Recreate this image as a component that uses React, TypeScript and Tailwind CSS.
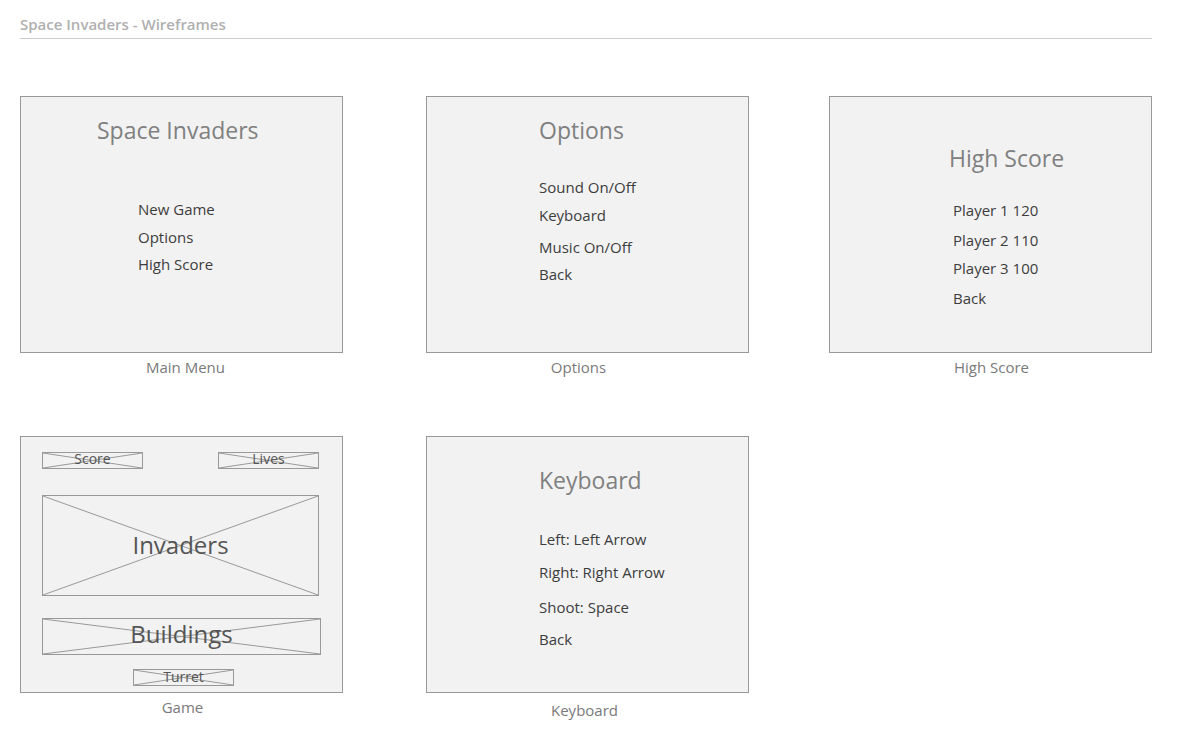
import React from 'react';

const font = { fontFamily: '"Open Sans", "Noto Sans", sans-serif' };

interface ScreenProps {
  label: string;
  className?: string;
  labelClass?: string;
  children: React.ReactNode;
  bodyClass?: string;
}

const Screen: React.FC<ScreenProps> = ({ label, className = '', labelClass = '', bodyClass = '', children }) => (
  <div className={`flex flex-col w-[323px] ${className}`}>
    <div className={`h-[257px] border border-[#999] bg-[#f2f2f2] flex flex-col ${bodyClass}`}>{children}</div>
    <div className={`text-center text-[15px] leading-[20px] text-[#7a7a7a] ${labelClass}`}>{label}</div>
  </div>
);

const Title: React.FC<{ children: React.ReactNode; className?: string }> = ({ children, className = '' }) => (
  <div className={`text-[23px] leading-[32px] text-[#808080] ${className}`}>{children}</div>
);

const Item: React.FC<{ children: React.ReactNode; className?: string }> = ({ children, className = '' }) => (
  <div className={`text-[15px] leading-[20px] text-[#3d3d3d] ${className}`}>{children}</div>
);

// placeholder box with crossed lines
const XBox: React.FC<{ text: string; className?: string; textClass?: string }> = ({ text, className = '', textClass = '' }) => (
  <div className={`relative border border-[#999] flex items-center justify-center ${className}`}>
    <svg className="absolute inset-0 w-full h-full" preserveAspectRatio="none" viewBox="0 0 100 100">
      <line x1="0" y1="0" x2="100" y2="100" stroke="#999" strokeWidth="1" vectorEffect="non-scaling-stroke" />
      <line x1="100" y1="0" x2="0" y2="100" stroke="#999" strokeWidth="1" vectorEffect="non-scaling-stroke" />
    </svg>
    <span className={`relative text-[#555] ${textClass}`}>{text}</span>
  </div>
);

export default function App() {
  return (
    <div className="w-[1192px] h-[753px] bg-white px-[20px] pt-[14px]" style={font}>
      <div className="w-[1132px] border-b border-[#ccc] pb-[4px]">
        <div className="text-[15px] leading-[20px] font-semibold text-[#b0b0b0]">Space Invaders - Wireframes</div>
      </div>

      <div className="flex mt-[57px]">
        <Screen label="Main Menu" labelClass="mt-[4px] pl-[8px]" bodyClass="pt-[17px] pl-[76px]">
          <Title>Space Invaders</Title>
          <Item className="mt-[53px] ml-[41px]">New Game</Item>
          <Item className="mt-[8px] ml-[41px]">Options</Item>
          <Item className="mt-[7px] ml-[41px]">High Score</Item>
        </Screen>
        <Screen label="Options" className="ml-[83px]" labelClass="mt-[4px] pr-[18px]" bodyClass="pt-[17px] pl-[112px]">
          <Title>Options</Title>
          <Item className="mt-[31px]">Sound On/Off</Item>
          <Item className="mt-[8px]">Keyboard</Item>
          <Item className="mt-[12px]">Music On/Off</Item>
          <Item className="mt-[7px]">Back</Item>
        </Screen>
        <Screen label="High Score" className="ml-[80px]" labelClass="mt-[4px] pl-[2px]" bodyClass="pt-[45px] pl-[119px]">
          <Title>High Score</Title>
          <Item className="mt-[26px] ml-[4px]">Player 1 120</Item>
          <Item className="mt-[10px] ml-[4px]">Player 2 110</Item>
          <Item className="mt-[8px] ml-[4px]">Player 3 100</Item>
          <Item className="mt-[10px] ml-[4px]">Back</Item>
        </Screen>
      </div>

      <div className="flex mt-[59px]">
        <Screen label="Game" labelClass="mt-[4px] pl-[2px]" bodyClass="pt-[15px] pl-[21px]">
          <div className="flex">
            <XBox text="Score" className="w-[101px] h-[17px]" textClass="text-[14px] leading-[17px] -mt-[4px]" />
            <XBox text="Lives" className="w-[101px] h-[17px] ml-[75px]" textClass="text-[14px] leading-[17px] -mt-[4px]" />
          </div>
          <XBox text="Invaders" className="w-[277px] h-[101px] mt-[26px]" textClass="text-[24px] leading-[30px] text-[#3d3d3d] -mt-[2px]" />
          <XBox text="Buildings" className="w-[279px] h-[37px] mt-[22px]" textClass="text-[24px] leading-[30px] text-[#3d3d3d] -mt-[6px]" />
          <XBox text="Turret" className="w-[101px] h-[17px] mt-[14px] ml-[91px]" textClass="text-[14px] leading-[17px] -mt-[2px]" />
        </Screen>
        <Screen label="Keyboard" className="ml-[83px]" labelClass="mt-[7px] pr-[6px]" bodyClass="pt-[27px] pl-[112px]">
          <Title>Keyboard</Title>
          <Item className="mt-[33px]">Left: Left Arrow</Item>
          <Item className="mt-[13px]">Right: Right Arrow</Item>
          <Item className="mt-[15px]">Shoot: Space</Item>
          <Item className="mt-[12px]">Back</Item>
        </Screen>
      </div>
    </div>
  );
}
